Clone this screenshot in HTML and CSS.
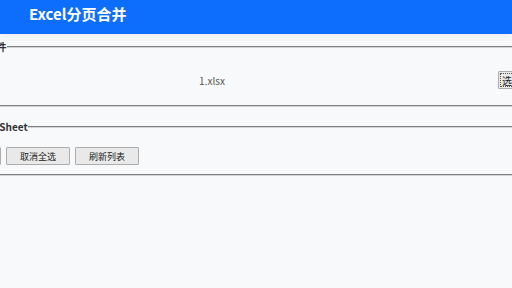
FILE: index.html
```html
<!DOCTYPE html>
<html lang="zh-CN">

<head>
    <meta charset="UTF-8" />
    <meta name="viewport" content="width=device-width, initial-scale=1.0" />
    <title>Excel分页合并</title>
    <link rel="stylesheet" href="styles.css">
</head>

<body>
    <header>
        <h1>Excel分页合并</h1>
    </header>

    <div class="main">
        <fieldset class="panel">
            <legend>选择 Excel 文件</legend>
            <div class="file-row">
                <span class="file-name">1.xlsx</span>
                <button type="button" class="btn btn-small btn-focus">选择文件</button>
            </div>
        </fieldset>

        <fieldset class="panel">
            <legend>选择要合并的 Sheet</legend>
            <div class="btn-row">
                <button type="button" class="btn">全选</button>
                <button type="button" class="btn">取消全选</button>
                <button type="button" class="btn">刷新列表</button>
            </div>
        </fieldset>
    </div>
</body>

</html>
```

FILE: styles.css
```css
* {
    margin: 0;
    padding: 0;
    box-sizing: border-box;
}

body {
    width: 512px;
    height: 288px;
    overflow: hidden;
    background-color: #f8f9fa;
    font-family: "Noto Sans CJK SC", "Noto Sans", sans-serif;
    color: #333;
}

header {
    height: 34px;
    padding: 5px 29px 0;
    background-color: #0d6efd;
    box-shadow: 0 2px 8px rgba(0, 0, 0, 0.06);
}

header h1 {
    font-size: 15px;
    line-height: 18px;
    font-weight: bold;
    color: #fff;
}

.main {
    width: 637px;
    margin-left: -77px;
    padding-top: 6px;
}

.panel {
    border: 2px groove #d4d4d4;
    padding: 13px 12px 9px;
    margin-bottom: 13px;
}

.panel legend {
    font-size: 10px;
    line-height: 14px;
    font-weight: bold;
    color: #333;
}

.file-row {
    display: flex;
    align-items: center;
    gap: 6px;
    padding: 4px 0 7px;
}

.file-name {
    flex: 1;
    padding-right: 5px;
    text-align: center;
    font-size: 10px;
    color: #555;
}

.btn-row {
    display: flex;
    gap: 5px;
}

.btn {
    min-width: 64px;
    height: 18px;
    padding: 0 13px;
    font-family: inherit;
    font-size: 9px;
    color: #222;
    background-color: #e9e9e9;
    border: 1px solid #adadad;
    border-radius: 1px;
}

.btn-small {
    min-width: 0;
    padding: 0 3px;
    font-size: 10px;
}

.btn-focus {
    outline: 1px dotted #555;
    outline-offset: -3px;
}
```
